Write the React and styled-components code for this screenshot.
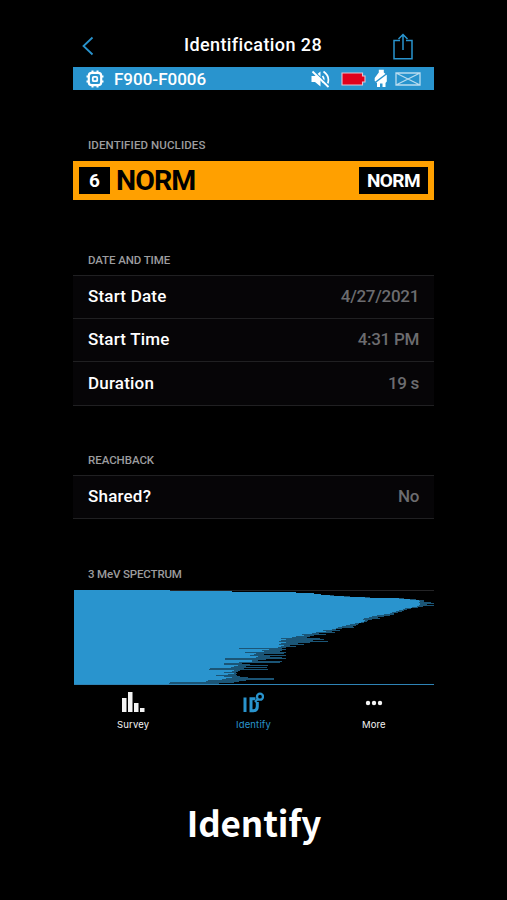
import React from "react";
import styled, { createGlobalStyle } from "styled-components";

const BLUE = "#2994ce";

const GlobalStyle = createGlobalStyle`
* { box-sizing: border-box; }
html, body { margin: 0; background-color: #000; }
`;

const Page = styled.div`
width: 507px;
height: 900px;
padding-top: 25px;
overflow: hidden;
background-color: #000;
color: #fff;
font-family: Roboto, "Liberation Sans", sans-serif;
`;

const Screen = styled.main`
width: 361px;
margin-left: 73px;
`;

const Header = styled.header`
display: grid;
grid-template-columns: 40px 1fr 40px;
align-items: center;
height: 42px;
padding: 0 12px 0 9px;
`;

const HeaderButton = styled.button`
display: flex;
align-items: center;
justify-content: ${({ $end }) => ($end ? "flex-end" : "flex-start")};
height: 42px;
padding: ${({ $end }) => ($end ? "1px 9px 0 0" : "0")};
border: none;
background: none;
color: ${BLUE};
`;

const Title = styled.h1`
margin: 0;
padding: 0 0 3px 2px;
font-size: 18px;
line-height: 22px;
font-weight: 500;
letter-spacing: 0.4px;
text-align: center;
white-space: nowrap;
`;

const StatusBar = styled.div`
display: flex;
align-items: center;
height: 23px;
padding: 0 13px;
background-color: ${BLUE};
`;

const Device = styled.span`
flex: 1;
margin-left: 10px;
font-size: 17px;
line-height: 22px;
font-weight: 500;
letter-spacing: 0;
`;

const StatusIcons = styled.div`
display: grid;
grid-template-columns: 30px 33px 21px 26px;
align-items: center;
`;

const Label = styled.h2`
height: ${({ $height }) => $height}px;
margin: 0;
padding-left: 15px;
display: flex;
align-items: flex-end;
font-size: 11.5px;
line-height: 14px;
font-weight: 500;
letter-spacing: ${({ $spacing }) => $spacing}px;
color: #9c9c9e;
`;

const Nuclide = styled.div`
display: flex;
align-items: center;
height: 39px;
margin-top: 9px;
padding: 0 6px;
background-color: #ffa000;
`;

const Badge = styled.span`
display: flex;
align-items: center;
justify-content: center;
width: ${({ $width }) => $width}px;
height: 27px;
padding-bottom: 1px;
background-color: #000;
color: #fff;
font-size: 19px;
font-weight: 700;
letter-spacing: ${({ $spacing }) => $spacing || 0}px;
`;

const NuclideName = styled.strong`
flex: 1;
margin-left: 6px;
padding-bottom: 1px;
font-size: 28.5px;
line-height: 37px;
letter-spacing: -0.9px;
color: #000;
`;

const List = styled.dl`
margin: 8px 0 0;
border-top: 1px solid #202022;
`;

const Row = styled.div`
display: flex;
align-items: center;
justify-content: space-between;
height: ${({ $height }) => $height || 43}px;
padding: 0 15px 2px;
border-bottom: 1px solid #202022;
background-color: #060507;
font-size: 17px;
line-height: 20px;
font-weight: 500;
`;

const Name = styled.dt`
letter-spacing: 0.2px;
`;

const Value = styled.dd`
margin: 0;
letter-spacing: -0.3px;
color: #6c6c6f;
`;

const Chart = styled.svg`
display: block;
margin-top: 9px;
`;

const TabBar = styled.nav`
display: grid;
grid-template-columns: repeat(3, 1fr);
height: 46px;
`;

const Tab = styled.button`
display: flex;
flex-direction: column;
align-items: center;
padding: 5px 0 0;
border: none;
background: none;
color: ${({ $active }) => ($active ? BLUE : "#f4f4f4")};
font-family: Inter, "Liberation Sans", sans-serif;
font-size: 9.5px;
line-height: 12px;
letter-spacing: 0.15px;

svg {
  margin-bottom: 6px;
}
`;

const Caption = styled.p`
margin: 0;
padding: 60px 0 0 1px;
font-family: "Noto Sans CJK SC", "Noto Sans", sans-serif;
font-size: 35px;
line-height: 60px;
font-weight: 700;
letter-spacing: -0.1px;
text-align: center;
`;

// One entry per channel row: [end of solid bar, end of faint bar]
const spectrum = [
  [96, 96], [158, 158], [222, 222], [240, 240], [247, 247],
  [256, 260], [270, 276], [291, 296], [325, 330], [336, 342],
  [345, 350], [346, 350], [345, 357], [346, 360], [346, 353], [345, 360],
  [343, 349], [338, 344], [331, 337], [329, 333],
  [325, 330], [322, 328], [318, 324], [316, 320], [310, 320],
  [303, 316], [298, 310], [295, 304], [290, 306], [289, 298],
  [291, 294], [290, 293], [287, 290], [281, 285], [276, 284],
  [272, 282], [268, 279], [264, 280], [262, 268], [258, 262],
  [249, 266], [252, 258], [242, 261], [238, 245], [228, 252],
  [230, 240], [222, 236], [218, 233], [207, 246], [212, 250],
  [207, 239], [205, 254], [212, 236], [207, 224], [205, 230],
  [210, 216], [207, 222], [204, 212], [165, 208], [195, 212],
  [188, 208], [190, 206], [171, 212], [182, 210], [180, 190],
  [176, 212], [184, 196], [182, 208], [151, 212], [151, 192],
  [178, 184], [178, 208], [165, 206], [150, 168], [150, 176],
  [164, 194], [160, 172], [157, 193], [136, 170], [135, 194],
  [160, 166], [158, 164], [150, 162], [160, 163], [154, 162],
  [142, 163], [150, 166], [158, 174], [152, 200], [148, 200],
  [134, 172], [132, 165], [96, 160], [95, 145],
];

const bars = (end) =>
  spectrum.map((row, y) => `M0 ${y + 0.5}H${row[end]}`).join("");

const Spectrum = () => (
  <Chart width="361" height="96" viewBox="-1 0 361 96" shapeRendering="crispEdges">
    <path d="M0 .5H360" stroke="#242426" />
    <path d={bars(1)} stroke="#1b5576" />
    <path d={bars(0)} stroke={BLUE} />
    <path d="M0 94H360" stroke="#2e83b5" />
  </Chart>
);

const BackIcon = () => (
  <svg width="14" height="20" viewBox="0 0 14 20" fill="none" stroke="currentColor" strokeWidth="1.8">
    <path d="M10.500 1.500 1.500 10l9 8.500" />
  </svg>
);

const ShareIcon = () => (
  <svg width="20" height="27" viewBox="0 0 20 27" fill="none" stroke="currentColor" strokeWidth="1.5">
    <path d="M7 7.5H1v18.300h18V7.500h-6M10 17V1.500M5.500 6 10 1.500 14.500 6" />
  </svg>
);

const ChipIcon = () => (
  <svg width="18" height="18" viewBox="0 0 18 18" fill="none" stroke="#fff">
    <rect x="2.800" y="2.800" width="12.400" height="12.400" rx="3" strokeWidth="2.200" />
    <rect x="6.800" y="6.800" width="4.400" height="4.400" rx="1" strokeWidth="1.800" />
    <path d="M6.500.5v2M11.500.5v2M6.500 15.500v2M11.500 15.500v2M.5 6.500h2M.5 11.500h2M15.500 6.500h2M15.500 11.500h2" strokeWidth="2" />
  </svg>
);

const MuteIcon = () => (
  <svg width="19" height="18" viewBox="0 0 19 18" fill="none" stroke="#fff">
    <path d="M.5 6H4l5.500-4.500v15L4 12H.5z" fill="#fff" stroke="none" />
    <path d="M11.500 6q2.500 3 0 6.500M12.500 1.500q7 5 4 12.500" strokeWidth="1.700" />
    <path d="M2.500 1 18.500 16" stroke={BLUE} strokeWidth="1.500" />
    <path d="M1.500 1.500 17.500 17" strokeWidth="1.800" />
  </svg>
);

const BatteryIcon = () => (
  <svg width="25" height="14" viewBox="0 0 25 14">
    <path d="M1 1h20.500v3h2.500v6h-2.500v3H1z" fill="#e1001c" stroke="#e2c5d3" strokeWidth="1.100" />
  </svg>
);

const DetectorIcon = () => (
  <svg width="14" height="19" viewBox="0 0 14 19">
    <path d="M4.800 3.500V.8h5v2.700l3 2.500v6.500L11.500 14v4H8.500v-3.500H6V18H3v-4l-2.300-2V9z" fill="#fff" />
    <path d="M.5 14 13 4.500" stroke={BLUE} strokeWidth="1.500" />
  </svg>
);

const EnvelopeIcon = () => (
  <svg width="26" height="14" viewBox="0 0 26 14" fill="none" stroke="#b9dcf0" strokeWidth="1.300">
    <path d="M1 1h24v12H1zM1 1l24 12M25 1 1 13" />
  </svg>
);

const SurveyIcon = () => (
  <svg width="24" height="22" viewBox="0 0 24 22" fill="currentColor">
    <path d="M1 7h4.500v14H1zM7 1h4.500v20H7zM13 12h4.500v9H13zM19 17h4.500v4H19z" />
  </svg>
);

const IdentifyIcon = () => (
  <svg width="22" height="22" viewBox="0 0 22 22" fill="none" stroke="currentColor">
    <path d="M3 6.500V21M15.300 11v4.500q0 4.200-4 4.200H9V7.800h4.500" strokeWidth="3" />
    <circle cx="18" cy="5.700" r="3" strokeWidth="2.300" />
    <path d="M13 11 15.800 8" strokeWidth="2.200" />
  </svg>
);

const MoreIcon = () => (
  <svg width="18" height="22" viewBox="0 0 18 22" fill="currentColor">
    <circle cx="3" cy="12" r="2.200" />
    <circle cx="9" cy="12" r="2.200" />
    <circle cx="15" cy="12" r="2.200" />
  </svg>
);

const App = () => {
  return (
    <Page>
      <GlobalStyle />
      <Screen>
        <Header>
          <HeaderButton aria-label="Back"><BackIcon /></HeaderButton>
          <Title>Identification 28</Title>
          <HeaderButton $end aria-label="Share"><ShareIcon /></HeaderButton>
        </Header>
        <StatusBar>
          <ChipIcon />
          <Device>F900-F0006</Device>
          <StatusIcons>
            <MuteIcon />
            <BatteryIcon />
            <DetectorIcon />
            <EnvelopeIcon />
          </StatusIcons>
        </StatusBar>

        <Label $height={62} $spacing={0.1}>IDENTIFIED NUCLIDES</Label>
        <Nuclide>
          <Badge $width={31}>6</Badge>
          <NuclideName>NORM</NuclideName>
          <Badge $width={69} $spacing={-0.6}>NORM</Badge>
        </Nuclide>

        <Label $height={67} $spacing={-0.1}>DATE AND TIME</Label>
        <List>
          <Row><Name>Start Date</Name><Value>4/27/2021</Value></Row>
          <Row><Name>Start Time</Name><Value>4:31 PM</Value></Row>
          <Row $height={44}><Name>Duration</Name><Value>19 s</Value></Row>
        </List>

        <Label $height={61} $spacing={-0.05}>REACHBACK</Label>
        <List>
          <Row><Name>Shared?</Name><Value>No</Value></Row>
        </List>

        <Label $height={62} $spacing={-0.15}>3 MeV SPECTRUM</Label>
        <Spectrum />
        <TabBar>
          <Tab><SurveyIcon />Survey</Tab>
          <Tab $active><IdentifyIcon />Identify</Tab>
          <Tab><MoreIcon />More</Tab>
        </TabBar>
      </Screen>
      <Caption>Identify</Caption>
    </Page>
  );
};

export default App;
